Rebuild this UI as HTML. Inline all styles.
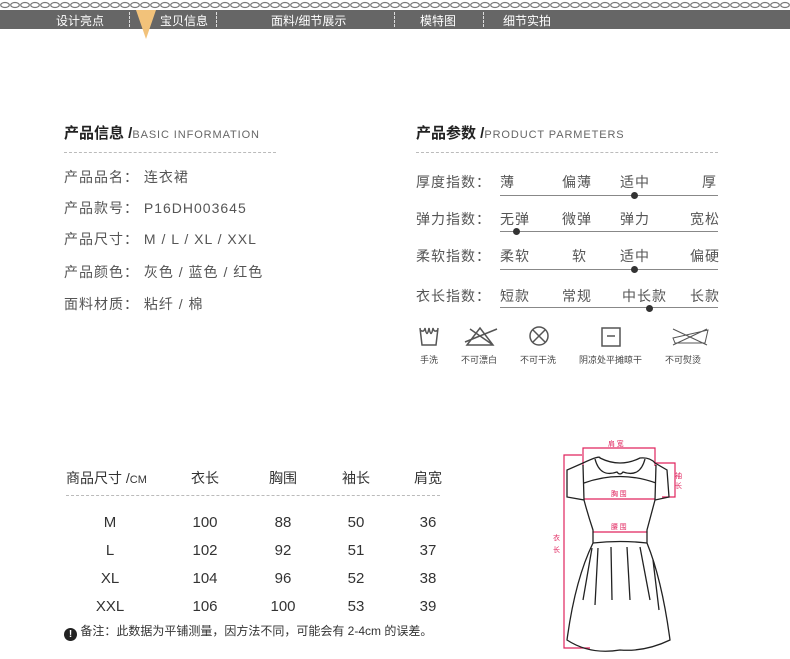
<!DOCTYPE html>
<html><head><meta charset="utf-8"><style>
*{margin:0;padding:0;box-sizing:border-box}
body{width:790px;height:659px;background:#fff;position:relative;overflow:hidden;font-family:"Liberation Sans","Noto Sans CJK SC",sans-serif;color:#555}
.a{position:absolute;white-space:nowrap}
.nav{position:absolute;left:0;top:10px;width:790px;height:19px;background:#666;}
.nav span{position:absolute;top:2px;color:#fff;font-size:12px}
.sep{position:absolute;top:2px;height:15px;border-left:1px dashed #ddd}
.chain{position:absolute;left:0;top:0;width:790px;height:10px}
.t{font-size:15px;font-weight:bold;color:#222}
.t small{font-size:11px;font-weight:normal;color:#666;letter-spacing:.9px}
.dash{position:absolute;height:0;border-top:1px dashed #bbb}
.r{font-size:14px;color:#555;letter-spacing:1px}
.line{position:absolute;height:1px;background:#888}
.dot{position:absolute;width:7px;height:7px;border-radius:50%;background:#333}
.ic{font-size:9px;color:#444}
.tb{font-size:14px;color:#333;text-align:center;width:60px}
</style></head><body>
<svg class="chain" viewBox="0 0 790 10"><defs><pattern id="p" width="10" height="10" patternUnits="userSpaceOnUse"><ellipse cx="5" cy="5" rx="4.3" ry="2.5" fill="none" stroke="#777" stroke-width="1.2"/></pattern></defs><rect width="790" height="10" fill="url(#p)"/></svg>
<div class="nav">
<span style="left:56px">设计亮点</span>
<div class="sep" style="left:129px"></div>
<span style="left:160px">宝贝信息</span>
<div class="sep" style="left:216px"></div>
<span style="left:271px">面料/细节展示</span>
<div class="sep" style="left:394px"></div>
<span style="left:420px">模特图</span>
<div class="sep" style="left:483px"></div>
<span style="left:503px">细节实拍</span>
</div>
<svg class="a" style="left:136px;top:10px" width="20" height="29"><polygon points="0,0 20,0 10,29" fill="#f2c27a"/></svg>

<div class="a t" style="left:64px;top:122px">产品信息 /<small>BASIC INFORMATION</small></div>
<div class="dash" style="left:64px;top:152px;width:212px"></div>
<div class="a r" style="left:64px;top:167px">产品品名：&nbsp;连衣裙</div>
<div class="a r" style="left:64px;top:198px">产品款号：&nbsp;P16DH003645</div>
<div class="a r" style="left:64px;top:229px">产品尺寸：&nbsp;M / L / XL / XXL</div>
<div class="a r" style="left:64px;top:262px">产品颜色：&nbsp;灰色 / 蓝色 / 红色</div>
<div class="a r" style="left:64px;top:294px">面料材质：&nbsp;粘纤 / 棉</div>

<div class="a t" style="left:416px;top:122px">产品参数 /<small>PRODUCT PARMETERS</small></div>
<div class="dash" style="left:416px;top:152px;width:302px"></div>

<div class="a r" style="left:416px;top:172px">厚度指数：</div>
<div class="a r" style="left:500px;top:172px">薄</div><div class="a r" style="left:562px;top:172px">偏薄</div><div class="a r" style="left:620px;top:172px">适中</div><div class="a r" style="left:702px;top:172px">厚</div>
<div class="line" style="left:500px;top:195px;width:218px"></div><div class="dot" style="left:631px;top:192px"></div>

<div class="a r" style="left:416px;top:209px">弹力指数：</div>
<div class="a r" style="left:500px;top:209px">无弹</div><div class="a r" style="left:562px;top:209px">微弹</div><div class="a r" style="left:620px;top:209px">弹力</div><div class="a r" style="left:690px;top:209px">宽松</div>
<div class="line" style="left:500px;top:231px;width:218px"></div><div class="dot" style="left:513px;top:228px"></div>

<div class="a r" style="left:416px;top:246px">柔软指数：</div>
<div class="a r" style="left:500px;top:246px">柔软</div><div class="a r" style="left:572px;top:246px">软</div><div class="a r" style="left:620px;top:246px">适中</div><div class="a r" style="left:690px;top:246px">偏硬</div>
<div class="line" style="left:500px;top:269px;width:218px"></div><div class="dot" style="left:631px;top:266px"></div>

<div class="a r" style="left:416px;top:286px">衣长指数：</div>
<div class="a r" style="left:500px;top:286px">短款</div><div class="a r" style="left:562px;top:286px">常规</div><div class="a r" style="left:622px;top:286px">中长款</div><div class="a r" style="left:690px;top:286px">长款</div>
<div class="line" style="left:500px;top:307px;width:218px"></div><div class="dot" style="left:646px;top:305px"></div>

<svg class="a" style="left:405px;top:325px" width="320" height="25" fill="none" stroke="#555" stroke-width="1.5">
<path d="M15 3 L17 20 H31 L33 3 M15 5 Q19 8 20 3 Q22 14 24 3 Q26 14 28 3 Q29 8 33 5"/>
<path d="M62 20 L75 3 L88 20 Z M60 17 L92 4 M65 4 L88 20" />
<circle cx="134" cy="11" r="9"/><path d="M128 5 L140 17 M140 5 L128 17"/>
<rect x="197" y="3" width="18" height="18"/><path d="M202 11 H210"/>
<path d="M270 18 L300 18 L303 5 L268 13 Z M268 4 L302 20 M302 4 L268 20" stroke-width="1"/>
</svg>
<div class="a ic" style="left:420px;top:353px">手洗</div>
<div class="a ic" style="left:461px;top:353px">不可漂白</div>
<div class="a ic" style="left:520px;top:353px">不可干洗</div>
<div class="a ic" style="left:579px;top:353px">阴凉处平摊晾干</div>
<div class="a ic" style="left:665px;top:353px">不可熨烫</div>

<div class="a" style="left:66px;top:468px;font-size:14px;color:#333">商品尺寸 /<span style="font-size:11px">CM</span></div>
<div class="a tb" style="left:175px;top:468px">衣长</div>
<div class="a tb" style="left:253px;top:468px">胸围</div>
<div class="a tb" style="left:326px;top:468px">袖长</div>
<div class="a tb" style="left:398px;top:468px">肩宽</div>
<div class="dash" style="left:66px;top:495px;width:374px"></div>
<div class="a tb" style="left:80px;top:514px;font-size:15px">M</div><div class="a tb" style="left:175px;top:514px;font-size:15px">100</div><div class="a tb" style="left:253px;top:514px;font-size:15px">88</div><div class="a tb" style="left:326px;top:514px;font-size:15px">50</div><div class="a tb" style="left:398px;top:514px;font-size:15px">36</div>
<div class="a tb" style="left:80px;top:542px;font-size:15px">L</div><div class="a tb" style="left:175px;top:542px;font-size:15px">102</div><div class="a tb" style="left:253px;top:542px;font-size:15px">92</div><div class="a tb" style="left:326px;top:542px;font-size:15px">51</div><div class="a tb" style="left:398px;top:542px;font-size:15px">37</div>
<div class="a tb" style="left:80px;top:570px;font-size:15px">XL</div><div class="a tb" style="left:175px;top:570px;font-size:15px">104</div><div class="a tb" style="left:253px;top:570px;font-size:15px">96</div><div class="a tb" style="left:326px;top:570px;font-size:15px">52</div><div class="a tb" style="left:398px;top:570px;font-size:15px">38</div>
<div class="a tb" style="left:80px;top:598px;font-size:15px">XXL</div><div class="a tb" style="left:175px;top:598px;font-size:15px">106</div><div class="a tb" style="left:253px;top:598px;font-size:15px">100</div><div class="a tb" style="left:326px;top:598px;font-size:15px">53</div><div class="a tb" style="left:398px;top:598px;font-size:15px">39</div>
<div class="a" style="left:64px;top:622px;font-size:12px;color:#333"><span style="display:inline-block;width:13px;height:13px;border-radius:50%;background:#222;color:#fff;text-align:center;font-size:10px;line-height:13px;font-weight:bold;vertical-align:-2px">!</span> 备注：此数据为平铺测量，因方法不同，可能会有 2-4cm 的误差。</div>

<svg class="a" style="left:550px;top:430px" width="150" height="229" viewBox="550 430 150 229" fill="none" stroke="#222" stroke-width="1.3">
<g stroke="#e0245e" stroke-width="1.2">
<path d="M583 466 V448 H655 V466"/><path d="M655 463 H675 V497 H662"/>
<path d="M584 499 H655"/><path d="M593 532 H647"/>
<path d="M582 455 H564 V648 H590"/>
</g>
<g fill="#e0245e" stroke="none" font-size="7" font-family="Noto Sans CJK SC">
<text x="608" y="446">肩 宽</text><text x="675" y="478">袖</text><text x="675" y="488">长</text>
<text x="611" y="496">胸 围</text><text x="611" y="529">腰 围</text>
<text x="553" y="540">衣</text><text x="553" y="552">长</text>
</g>
<path d="M583 463 Q600 455 600 458 Q620 468 640 458 Q650 457 655 463 L667 470 L669 497 L655 500 Q651 515 647 530 V543 Q662 580 670 640 Q645 652 620 650 Q590 655 567 640 Q575 580 593 543 V530 Q588 515 584 500 L567 497 L567 470 Z"/>
<path d="M595 459 Q600 478 617 472 Q620 476 623 472 Q640 478 645 459"/>
<path d="M584 500 L583 465 M655 500 L656 465 M584 483 Q620 470 656 483"/>
<path d="M593 543 Q620 540 647 543"/>
<path d="M592 548 L583 600 M598 548 L595 605 M611 547 L612 600 M627 547 L630 600 M640 547 L650 600 M653 560 L659 610"/>
</svg>
</body></html>
